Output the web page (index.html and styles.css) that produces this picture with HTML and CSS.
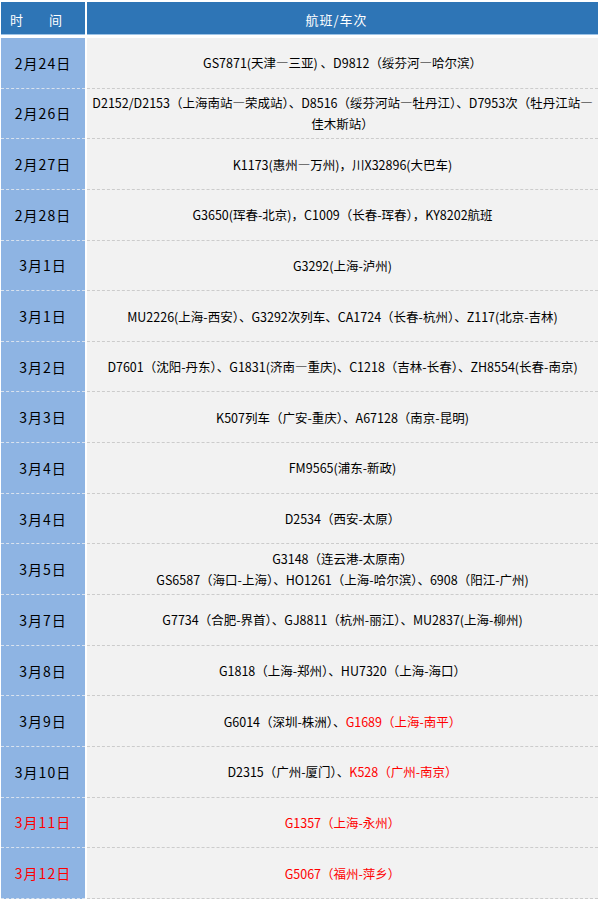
FILE: index.html
```html
<!DOCTYPE html>
<html lang="zh-CN">
<head>
<meta charset="utf-8">
<title>航班/车次</title>
<link rel="stylesheet" href="styles.css">
</head>
<body>
<div class="table">
  <div class="head head-date">时　　间</div>
  <div class="head head-trip">航班/车次</div>

  <div class="date">2月24日</div>
  <div class="trip">GS7871(天津—三亚) 、D9812（绥芬河—哈尔滨）</div>

  <div class="date">2月26日</div>
  <div class="trip">D2152/D2153（上海南站—荣成站）、D8516（绥芬河站—牡丹江）、D7953次（牡丹江站—<wbr>佳木斯站）</div>

  <div class="date">2月27日</div>
  <div class="trip">K1173(惠州—万州)，川X32896(大巴车)</div>

  <div class="date">2月28日</div>
  <div class="trip">G3650(珲春-北京)，C1009（长春-珲春），KY8202航班</div>

  <div class="date">3月1日</div>
  <div class="trip">G3292(上海-泸州)</div>

  <div class="date">3月1日</div>
  <div class="trip">MU2226(上海-西安）、G3292次列车、CA1724（长春-杭州）、Z117(北京-吉林)</div>

  <div class="date">3月2日</div>
  <div class="trip">D7601（沈阳-丹东）、G1831(济南—重庆)、C1218（吉林-长春）、ZH8554(长春-南京)</div>

  <div class="date">3月3日</div>
  <div class="trip">K507列车（广安-重庆）、A67128（南京-昆明)</div>

  <div class="date">3月4日</div>
  <div class="trip">FM9565(浦东-新政)</div>

  <div class="date">3月4日</div>
  <div class="trip">D2534（西安-太原）</div>

  <div class="date">3月5日</div>
  <div class="trip">G3148（连云港-太原南）<br>GS6587（海口-上海）、HO1261（上海-哈尔滨）、6908（阳江-广州)</div>

  <div class="date">3月7日</div>
  <div class="trip">G7734（合肥-界首）、GJ8811（杭州-丽江）、MU2837(上海-柳州)</div>

  <div class="date">3月8日</div>
  <div class="trip">G1818（上海-郑州）、HU7320（上海-海口）</div>

  <div class="date">3月9日</div>
  <div class="trip">G6014（深圳-株洲）、<span class="red">G1689（上海-南平）</span></div>

  <div class="date">3月10日</div>
  <div class="trip">D2315（广州-厦门）、<span class="red">K528（广州-南京）</span></div>

  <div class="date red">3月11日</div>
  <div class="trip red">G1357（上海-永州）</div>

  <div class="date red">3月12日</div>
  <div class="trip red">G5067（福州-萍乡）</div>
</div>
</body>
</html>
```

FILE: styles.css
```css
html, body {
  margin: 0;
  padding: 0;
  background: #ffffff;
}

body {
  font-family: "SimSun", "Noto Sans CJK SC", "Liberation Serif", serif;
  color: #000000;
}

.table {
  display: grid;
  grid-template-columns: 84px 511px;
  grid-template-rows: 36px;
  grid-auto-rows: 50.65px;
  column-gap: 2px;
  width: 597px;
  margin: 2px 0 0 1px;
}

.head {
  background: #2e75b6;
  color: #ffffff;
  font-size: 13px;
  display: flex;
  align-items: center;
  border-bottom: 1px solid #9dc3e6;
  box-sizing: border-box;
  height: 33px;
  align-self: start;
}

.head-date {
  padding-left: 9px;
  padding-top: 2px;
}

.head-trip {
  justify-content: center;
  letter-spacing: 1px;
  padding-right: 12px;
  padding-top: 2px;
}

.date,
.trip {
  display: flex;
  align-items: center;
  justify-content: center;
  text-align: center;
  box-sizing: border-box;
  border-bottom: 1px dashed #cccccc;
}

.date {
  background: #8eb4e3;
  font-size: 14px;
  letter-spacing: 1px;
  border-bottom-color: #d9e2ee;
}

.trip {
  background: #f2f2f2;
  font-size: 12.5px;
  line-height: 21px;
  padding: 0 4px;
  word-break: keep-all;
}

.red {
  color: #ff0000;
}
```
